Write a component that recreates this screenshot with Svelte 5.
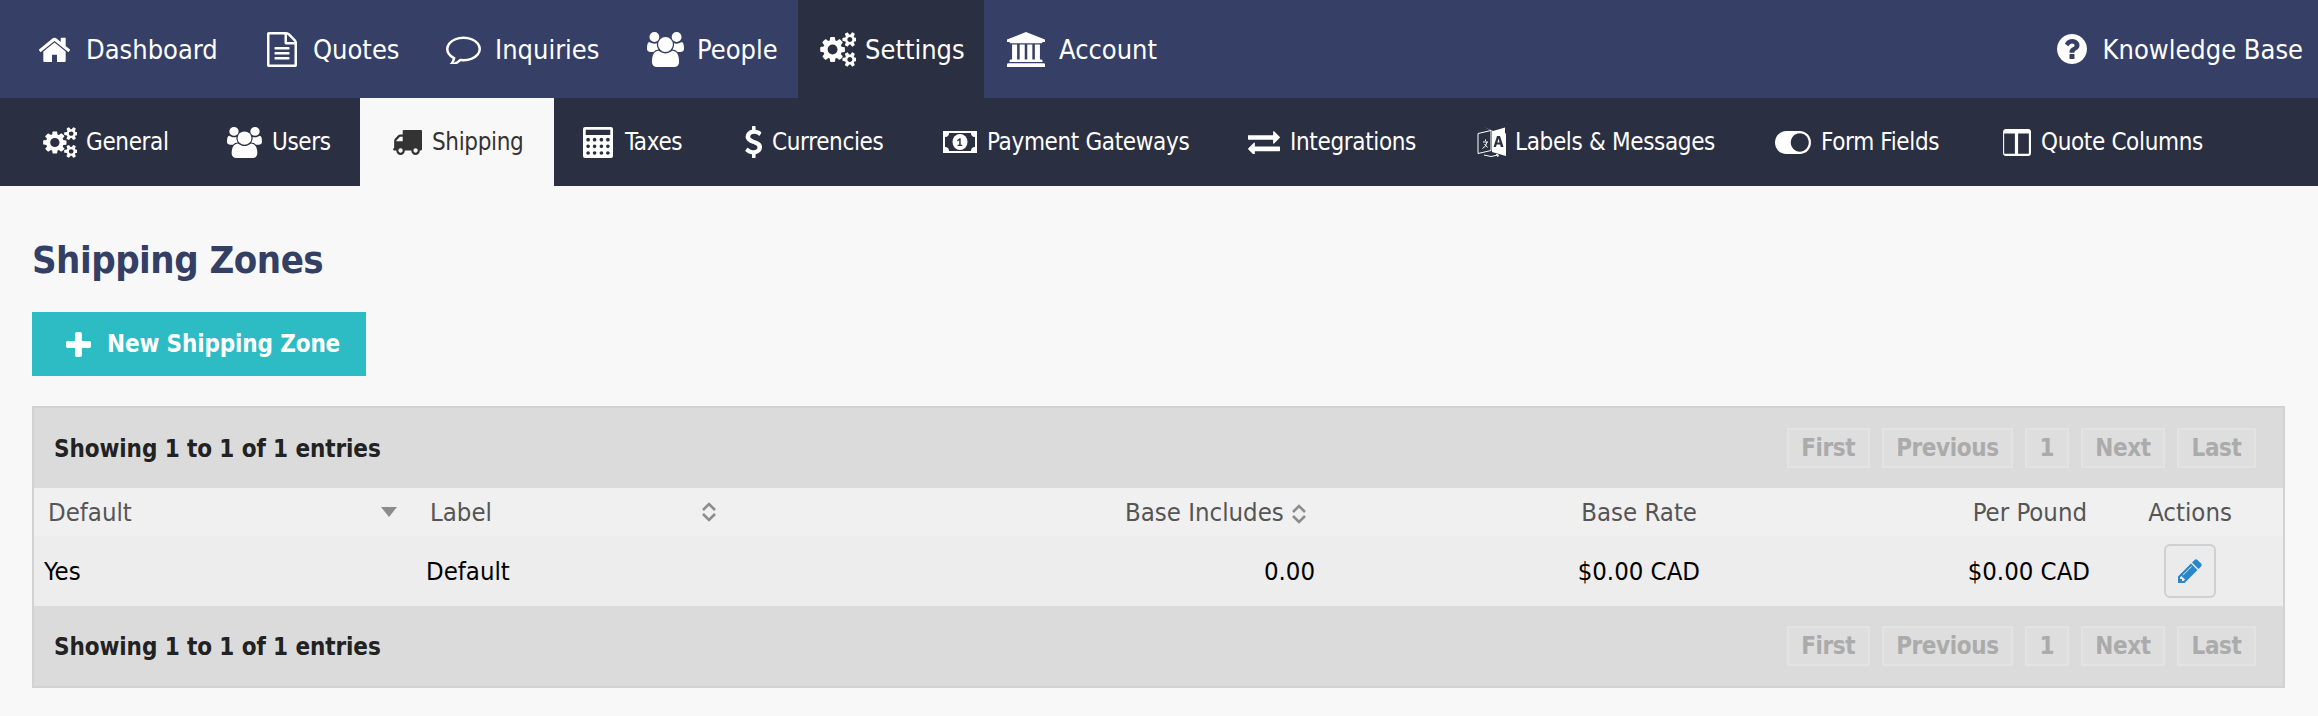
<script>
  // FontAwesome-style glyphs, viewBox cropped to the glyph
  const icons = {
    home: ['97 220 1598 1316', 'M1472 992v480q0 26-19 45t-45 19h-384v-384h-256v384h-384q-26 0-45-19t-19-45v-480q0-1 .5-3t.5-3l575-474 575 474q1 2 1 6zm223-69l-62 74q-8 9-21 11h-3q-13 0-21-7l-692-577-692 577q-12 8-24 7-13-2-21-11l-62-74q-8-10-7-23.5t11-21.5l719-599q32-26 76-26t76 26l244 204v-195q0-14 9-23t23-9h192q14 0 23 9t9 23v408l219 182q10 8 11 21.5t-7 23.5z'],
    file: ['128 0 1536 1792', 'M1596 380q28 28 48 76t20 88v1152q0 40-28 68t-68 28h-1344q-40 0-68-28t-28-68v-1600q0-40 28-68t68-28h896q40 0 88 20t76 48zm-444-244v376h376q-10-29-22-41l-313-313q-12-12-41-22zm384 1528v-1024h-416q-40 0-68-28t-28-68v-416h-768v1536h1280zm-1024-864q0-14 9-23t23-9h704q14 0 23 9t9 23v64q0 14-9 23t-23 9h-704q-14 0-23-9t-9-23v-64zm736 224q14 0 23 9t9 23v64q0 14-9 23t-23 9h-704q-14 0-23-9t-9-23v-64q0-14 9-23t23-9h704zm0 256q14 0 23 9t9 23v64q0 14-9 23t-23 9h-704q-14 0-23-9t-9-23v-64q0-14 9-23t23-9h704z'],
    comment: ['0 128 1792 1536', 'M896 384q-204 0-381.5 69.5t-282 187.5-104.5 255q0 112 71.5 213.5t201.5 175.5l87 50-27 96q-24 91-70 172 152-63 275-171l43-38 57 6q69 8 130 8 204 0 381.5-69.5t282-187.5 104.5-255-104.5-255-282-187.5-381.5-69.5zm896 512q0 174-120 321.5t-326 233-450 85.5q-70 0-145-8-198 175-460 242-49 14-114 22h-5q-15 0-27-10.5t-16-27.5v-1q-3-4-.5-12t2-10 4.5-9.5l6-9 7-8.5 8-9q7-8 31-34.5t34.5-38 31-39.5 32.5-51 27-59 26-76q-157-89-247.5-220t-90.5-281q0-174 120-321.5t326-233 450-85.5 450 85.5 326 233 120 321.5z'],
    users: ['0 0 1920 1792', 'M593 896q-162 5-265 128h-134q-82 0-138-40.5t-56-118.5q0-353 124-353 6 0 43.5 21t97.5 42.5 119 21.5q67 0 133-23-5 37-5 66 0 139 81 256zm1071 637q0 120-73 189.5t-194 69.5h-874q-121 0-194-69.5t-73-189.5q0-53 3.5-103.5t14-109 26.5-108.5 43-97.5 62-81 85.5-53.5 111.5-20q10 0 43 21.5t73 48 107 48 135 21.5 135-21.5 107-48 73-48 43-21.5q61 0 111.5 20t85.5 53.5 62 81 43 97.5 26.5 108.5 14 109 3.5 103.5zm-1024-1277q0 106-75 181t-181 75-181-75-75-181 75-181 181-75 181 75 75 181zm704 384q0 159-112.5 271.5t-271.5 112.5-271.5-112.5-112.5-271.5 112.5-271.5 271.5-112.5 271.5 112.5 112.5 271.5zm576 225q0 78-56 118.5t-138 40.5h-134q-103-123-265-128 81-117 81-256 0-29-5-66 66 23 133 23 59 0 119-21.5t97.5-42.5 43.5-21q124 0 124 353zm-128-609q0 106-75 181t-181 75-181-75-75-181 75-181 181-75 181 75 75 181z'],
    cogs: ['0 0 1920 1792', 'M960 896q0-106-75-181t-181-75-181 75-75 181 75 181 181 75 181-75 75-181zm768 512q0-52-38-90t-90-38-90 38-38 90q0 53 37.5 90.5t90.5 37.5 90.5-37.5 37.5-90.5zm0-1024q0-52-38-90t-90-38-90 38-38 90q0 53 37.5 90.5t90.5 37.5 90.5-37.5 37.5-90.5zm-384 421v185q0 10-7 19.5t-16 10.5l-155 24q-11 35-32 76 34 48 90 115 7 11 7 20 0 12-7 19-23 30-82.5 89.5t-78.5 59.5q-11 0-21-7l-115-90q-37 19-77 31-11 108-23 155-7 24-30 24h-186q-11 0-20-7.5t-10-17.5l-23-153q-34-10-75-31l-118 89q-7 7-20 7-11 0-21-8-144-133-144-160 0-9 7-19 10-14 41-53t47-61q-23-44-35-82l-152-24q-10-1-17-9.5t-7-19.5v-185q0-10 7-19.5t16-10.5l155-24q11-35 32-76-34-48-90-115-7-11-7-20 0-12 7-20 22-30 82-89t79-59q11 0 21 7l115 90q34-18 77-32 11-108 23-154 7-24 30-24h186q11 0 20 7.5t10 17.5l23 153q34 10 75 31l118-89q8-7 20-7 11 0 21 8 144 133 144 160 0 8-7 19-12 16-42 54t-45 60q23 48 34 82l152 23q10 2 17 10.5t7 19.5zm640 533v140q0 16-149 31-12 27-30 52 51 113 51 138 0 4-4 7-122 71-124 71-8 0-46-47t-52-68q-20 2-30 2t-30-2q-14 21-52 68t-46 47q-2 0-124-71-4-3-4-7 0-25 51-138-18-25-30-52-149-15-149-31v-140q0-16 149-31 13-29 30-52-51-113-51-138 0-4 4-7 4-2 35-20t59-34 30-16q8 0 46 46.5t52 67.5q20-2 30-2t30 2q51-71 92-112l6-2q4 0 124 70 4 3 4 7 0 25-51 138 17 23 30 52 149 15 149 31zm0-1024v140q0 16-149 31-12 27-30 52 51 113 51 138 0 4-4 7-122 71-124 71-8 0-46-47t-52-68q-20 2-30 2t-30-2q-14 21-52 68t-46 47q-2 0-124-71-4-3-4-7 0-25 51-138-18-25-30-52-149-15-149-31v-140q0-16 149-31 13-29 30-52-51-113-51-138 0-4 4-7 4-2 35-20t59-34 30-16q8 0 46 46.5t52 67.5q20-2 30-2t30 2q51-71 92-112l6-2q4 0 124 70 4 3 4 7 0 25-51 138 17 23 30 52 149 15 149 31z'],
    bank: ['0 0 1920 1792', 'M960 0l960 384v128h-128q0 26-20.5 45t-48.5 19h-1526q-28 0-48.5-19t-20.5-45h-128v-128zm-704 640h256v768h128v-768h256v768h128v-768h256v768h128v-768h256v768h59q28 0 48.5 19t20.5 45v64h-1664v-64q0-26 20.5-45t48.5-19h59v-768zm1595 960q28 0 48.5 19t20.5 45v128h-1920v-128q0-26 20.5-45t48.5-19h1782z'],
    truck: ['0 256 1792 1408', 'M640 1408q0-52-38-90t-90-38-90 38-38 90 38 90 90 38 90-38 38-90zm-384-512h384v-256h-158q-13 0-22 9l-195 195q-9 9-9 22v30zm1280 512q0-52-38-90t-90-38-90 38-38 90 38 90 90 38 90-38 38-90zm256-1088v1024q0 15-4 26.5t-13.5 18.5-16.5 11.5-23.5 6-22.5 2-25.5 0-22.5-.5q0 106-75 181t-181 75-181-75-75-181h-384q0 106-75 181t-181 75-181-75-75-181h-64q-3 0-22.5.5t-25.5 0-22.5-2-23.5-6-16.5-11.5-13.5-18.5-4-26.5q0-26 19-45t45-19v-320q0-8-.5-35t0-38 2.5-34.5 6.5-37 14-30.5 22.5-30l198-198q19-19 50.5-32t58.5-13h160v-192q0-26 19-45t45-19h1024q26 0 45 19t19 45z'],
    dollar: ['416 0 946 1792', 'M1362 1185q0 153-99.5 263.5t-258.5 136.5v175q0 14-9 23t-23 9h-135q-13 0-22.5-9.5t-9.5-22.5v-175q-66-9-127.5-31t-101.5-44.5-74-48-46.5-37.5-17.5-18q-17-21-2-41l103-135q7-10 23-12 15-2 24 9l2 2q113 99 243 125 37 8 74 8 81 0 142.5-43t61.5-122q0-28-15-53t-33.5-42-58.5-37.5-66-32-80-32.5q-39-16-61.5-25t-61.5-26.5-62.5-31-56.5-35.5-53.5-42.5-43.5-49-35.5-58-21-66.5-8.5-78q0-138 98-242t255-134v-180q0-13 9.5-22.5t22.5-9.5h135q14 0 23 9t9 23v176q57 6 110.5 23t87 33.5 63.5 37.5 39 29 15 14q17 18 5 38l-81 146q-8 15-23 16-14 3-27-7-3-3-14.5-12t-39-26.5-58.5-32-74.5-26-85.5-11.5q-95 0-155 43t-60 111q0 26 8.5 48t29.5 41.5 39.5 33 56 31 60.5 27 70 27.5q53 20 81 31.5t76 35 75.5 42.5 62 50 53 63.5 31.5 76.5 13 94z'],
    exchange: ['0 224 1792 1344', 'M1792 1184v192q0 13-9.5 22.5t-22.5 9.5h-1376v192q0 13-9.5 22.5t-22.5 9.5q-12 0-24-10l-319-320q-9-9-9-22 0-14 9-23l320-320q9-9 23-9 13 0 22.5 9.5t9.5 22.5v192h1376q13 0 22.5 9.5t9.5 22.5zm0-544q0 14-9 23l-320 320q-9 9-23 9-13 0-22.5-9.5t-9.5-22.5v-192h-1376q-13 0-22.5-9.5t-9.5-22.5v-192q0-13 9.5-22.5t22.5-9.5h1376v-192q0-14 9-23t23-9q12 0 24 10l319 319q9 9 9 23z'],
    toggle: ['0 256 2048 1280', 'M0 896q0-130 51-248.5t136.5-204 204-136.5 248.5-51h768q130 0 248.5 51t204 136.5 136.5 204 51 248.5-51 248.5-136.5 204-204 136.5-248.5 51h-768q-130 0-248.5-51t-204-136.5-136.5-204-51-248.5zm1408 512q104 0 198.5-40.5t163.5-109.5 109.5-163.5 40.5-198.5-40.5-198.5-109.5-163.5-163.5-109.5-198.5-40.5-198.5 40.5-163.5 109.5-109.5 163.5-40.5 198.5 40.5 198.5 109.5 163.5 163.5 109.5 198.5 40.5z'],
    columns: ['0 0 1728 1536', 'M160 1408h608v-1152h-640v1120q0 13 9.5 22.5t22.5 9.5zm1440-32v-1120h-640v1152h608q13 0 22.5-9.5t9.5-22.5zm128-1216v1216q0 66-47 113t-113 47h-1344q-66 0-113-47t-47-113v-1216q0-66 47-113t113-47h1344q66 0 113 47t47 113z'],
    question: ['128 128 1536 1536', 'M1024 1376v-192q0-14-9-23t-23-9h-192q-14 0-23 9t-9 23v192q0 14 9 23t23 9h192q14 0 23-9t9-23zm256-672q0-88-55.5-163t-138.5-116-170-41q-243 0-371 213-15 24 8 42l132 100q7 6 19 6 16 0 25-12 53-68 86-92 34-24 86-24 48 0 85.5 26t37.5 59q0 38-20 61t-68 45q-63 28-115.5 86.5t-52.5 125.5v36q0 14 9 23t23 9h192q14 0 23-9t9-23q0-19 21.5-49.5t54.5-49.5q32-18 49-28.5t46-35 44.5-48 28-60.5 12.5-81zm384 192q0 209-103 385.5t-279.5 279.5-385.5 103-385.5-103-279.5-279.5-103-385.5 103-385.5 279.5-279.5 385.5-103 385.5 103 279.5 279.5 103 385.5z'],
    plus: ['192 128 1408 1408', 'M1600 736v192q0 40-28 68t-68 28h-416v416q0 40-28 68t-68 28h-192q-40 0-68-28t-28-68v-416h-416q-40 0-68-28t-28-68v-192q0-40 28-68t68-28h416v-416q0-40 28-68t68-28h192q40 0 68 28t28 68v416h416q40 0 68 28t28 68z'],
    pencil: ['128 128 1536 1536', 'M491 1536l91-91-235-235-91 91v107h128v128h107zm523-928q0-22-22-22-10 0-17 7l-542 542q-7 7-7 17 0 22 22 22 10 0 17-7l542-542q7-7 7-17zm-54-192l416 416-832 832h-416v-416zm683 96q0 53-37 90l-166 166-416-416 166-165q36-38 90-38 53 0 91 38l235 234q37 39 37 91z']
  };

  // calculator: body with screen and 4x3 button holes, cut with evenodd
  let calc = 'M6 0h76q6 0 6 6v81q0 6-6 6h-76q-6 0-6-6v-81q0-6 6-6zM8 8v16h72v-16z';
  for (const y of [38, 58, 78]) for (const x of [15, 34, 54, 73]) {
    calc += `M${x - 5.5} ${y}a5.500 5.500 0 1 0 11 0a5.500 5.500 0 1 0 -11 0z`;
  }
  icons.calc = ['0 0 88 93', calc];

  const topNav = [
    { label: 'Dashboard', icon: 'home', width: 238, pad: 39, w: 31, h: 25, gap: 16 },
    { label: 'Quotes', icon: 'file', width: 187, pad: 29, w: 30, h: 35, gap: 16 },
    { label: 'Inquiries', icon: 'comment', width: 198, pad: 21, w: 35, h: 30, gap: 14 },
    { label: 'People', icon: 'users', width: 175, pad: 24, w: 37, h: 35, gap: 13 },
    { label: 'Settings', icon: 'cogs', width: 186, pad: 21, w: 37, h: 35, gap: 9, active: true },
    { label: 'Account', icon: 'bank', width: 196, pad: 23, w: 38, h: 35, gap: 14 }
  ];

  const subNav = [
    { label: 'General', icon: 'cogs', width: 200, pad: 42, w: 35, h: 31, gap: 9 },
    { label: 'Users', icon: 'users', width: 160, pad: 27, w: 35, h: 31, gap: 10 },
    { label: 'Shipping', icon: 'truck', width: 194, pad: 32, w: 30, h: 25, gap: 10, active: true },
    { label: 'Taxes', icon: 'calc', width: 161, pad: 29, w: 30, h: 31, gap: 12 },
    { label: 'Currencies', icon: 'dollar', width: 200, pad: 30, w: 17, h: 32, gap: 10 },
    { label: 'Payment Gateways', icon: 'money', width: 303, pad: 28, w: 34, h: 22, gap: 10 },
    { label: 'Integrations', icon: 'exchange', width: 230, pad: 30, w: 32, h: 24, gap: 10 },
    { label: 'Labels & Messages', icon: 'language', width: 297, pad: 29, w: 29, h: 31, gap: 9 },
    { label: 'Form Fields', icon: 'toggle', width: 228, pad: 30, w: 36, h: 23, gap: 10 },
    { label: 'Quote Columns', icon: 'columns', width: 260, pad: 29, w: 29, h: 27, gap: 10 }
  ];

  const pages = ['First', 'Previous', '1', 'Next', 'Last'];
</script>

{#snippet glyph(name, w, h)}
  {#if name === 'money'}
    <svg width={w} height={h} viewBox="0 0 34 22" class="ico" aria-hidden="true">
      <path fill="currentColor" fill-rule="evenodd" d="M0 0h34v22h-34zM6 2q0 4-4 4v10q4 0 4 4h22q0-4 4-4v-10q-4 0-4-4z" />
      <ellipse cx="17" cy="11" rx="7.5" ry="8" fill="currentColor" />
      <path d="M14.6 15v-1.2h1.6v-4.6l-1.5 1-.7-1 2.6-1.9h1.1v6.5h1.5v1.2z" fill="#2b2f42" />
    </svg>
  {:else if name === 'language'}
    <svg width={w} height={h} viewBox="0 0 29 31" class="ico" aria-hidden="true">
      <path fill="none" stroke="currentColor" stroke-width="1" d="M1 6.500l13-3v20l-13 3z" />
      <path fill="none" stroke="currentColor" stroke-width="1" d="M6 15h5M8.500 12.500v1.500M10 15q-1 5-4.500 6.500M7.500 17l3 3.500" />
      <path fill="currentColor" d="M7 0l9 4 12-3.500v5.500l1 1v22l-14-4V4z" />
      <path fill="#2b2f42" fill-rule="evenodd" d="M20 9h3l3.500 11h-2.700l-.7-2.500h-3.400l-.7 2.500h-2.500zM21.500 11.500l-1.100 4h2.200z" />
      <path fill="none" stroke="currentColor" stroke-width="1" d="M7 28q7 3 14 0M19 27.500l2.500.5-1 2" />
    </svg>
  {:else}
    <svg width={w} height={h} viewBox={icons[name][0]} preserveAspectRatio="none" class="ico" aria-hidden="true">
      <path fill="currentColor" fill-rule="evenodd" d={icons[name][1]} />
    </svg>
  {/if}
{/snippet}

{#snippet sortBoth()}
  <svg class="sort" width="16" height="20" viewBox="0 0 16 20" aria-hidden="true">
    <path d="M2 8l6-6 6 6M2 12l6 6 6-6" fill="none" stroke="#8c8c8c" stroke-width="2.600" />
  </svg>
{/snippet}

{#snippet pager()}
  <div class="bar">
    <span class="info">Showing 1 to 1 of 1 entries</span>
    <div class="pager">
      {#each pages as p}<span class="page">{p}</span>{/each}
    </div>
  </div>
{/snippet}

<nav class="top">
  {#each topNav as n}
    <a class="item" class:on={n.active} href="#top" style={`width:${n.width}px;padding-left:${n.pad}px`}>
      {@render glyph(n.icon, n.w, n.h)}
      <span style={`margin-left:${n.gap}px`}>{n.label}</span>
    </a>
  {/each}
  <a class="item kb" href="#top">
    {@render glyph('question', 30, 30)}
    <span>Knowledge Base</span>
  </a>
</nav>

<nav class="sub">
  {#each subNav as n}
    <a class="item" class:on={n.active} href="#top" style={`width:${n.width}px;padding-left:${n.pad}px`}>
      {@render glyph(n.icon, n.w, n.h)}
      <span style={`margin-left:${n.gap}px`}>{n.label}</span>
    </a>
  {/each}
</nav>

<main>
  <h1>Shipping Zones</h1>
  <button class="add">
    {@render glyph('plus', 25, 25)}
    <span>New Shipping Zone</span>
  </button>

  <div class="box">
    {@render pager()}
    <table>
      <colgroup>
        <col class="c1" /><col class="c2" /><col class="c3" /><col class="c4" /><col class="c5" /><col />
      </colgroup>
      <thead>
        <tr>
          <th class="sp"><span class="thi">Default <svg class="sort" width="16" height="10" viewBox="0 0 16 10" aria-hidden="true"><path d="M0 0h16l-8 10z" fill="#8c8c8c" /></svg></span></th>
          <th class="sp"><span class="thi">Label {@render sortBoth()}</span></th>
          <th class="r inc">Base Includes {@render sortBoth()}</th>
          <th class="r">Base Rate</th>
          <th class="r">Per Pound</th>
          <th class="act">Actions</th>
        </tr>
      </thead>
      <tbody>
        <tr>
          <td>Yes</td>
          <td>Default</td>
          <td class="r">0.00</td>
          <td class="r">$0.00 CAD</td>
          <td class="r">$0.00 CAD</td>
          <td class="act"><button class="edit" aria-label="Edit">{@render glyph('pencil', 24, 24)}</button></td>
        </tr>
      </tbody>
    </table>
    {@render pager()}
  </div>
</main>

<style>
  :global(body) { background: #f8f8f8; font-family: "DejaVu Sans", Verdana, sans-serif; font-stretch: condensed; }
  a { text-decoration: none; color: inherit; }
  .ico { display: block; flex: none; }

  .top, .sub { display: flex; color: #fff; }
  .top { height: 98px; background: #364066; font-size: 27px; }
  .sub { height: 88px; background: #2b2f42; font-size: 24px; letter-spacing: -0.35px; }
  .item { display: flex; align-items: center; box-sizing: border-box; flex: none; }
  .top .item.on { background: #2b2f42; }
  .sub .item.on { background: #f8f8f8; color: #333; }
  .kb { margin-left: auto; padding-right: 15px; gap: 16px; }

  main { padding: 0 33px 28px 32px; }
  h1 { margin: 0; padding-top: 52px; height: 74px; font-size: 38px; line-height: 44px; color: #343f66; font-weight: 700; letter-spacing: -0.5px; }
  .add { display: flex; align-items: center; gap: 16px; width: 334px; height: 64px; padding: 0 0 0 34px; border: 0; background: #2dbcc4; color: #fff; font: inherit; font-weight: 700; font-size: 24px; letter-spacing: -0.15px; }

  .box { margin-top: 30px; border: 2px solid #d2d2d2; background: #ededed; color: #000; font-size: 25.5px; }
  .bar { display: flex; justify-content: space-between; align-items: center; height: 80px; padding: 0 27px 0 20px; background: #dbdbdb; font-size: 24px; }
  .info { padding-top: 2px; font-weight: 700; color: #222; letter-spacing: -0.1px; }
  .pager { display: flex; gap: 12px; }
  .page { display: flex; align-items: center; padding: 0 12.5px; height: 40px; box-sizing: border-box; border: 2px solid #e3e3e3; background: #dedede; color: #ababab; font-weight: 700; letter-spacing: -0.4px; }

  table { width: 100%; table-layout: fixed; border-collapse: collapse; }
  .c1 { width: 382px; }
  .c2 { width: 320px; }
  .c3 { width: 589px; }
  .c4 { width: 385px; }
  .c5 { width: 390px; }
  th { height: 48px; padding: 0 13px 0 14px; background: #f0f0f0; color: #555; font-weight: 400; text-align: left; }
  td { height: 70px; padding: 0 10px; }
  .r { text-align: right; }
  .thi { display: flex; align-items: center; justify-content: space-between; padding-right: 6px; }
  th.inc { padding-right: 18px; }
  .sort { display: inline-block; vertical-align: middle; }
  .act { text-align: center; padding: 0 3px 0 0; }
  .edit { display: inline-flex; align-items: center; justify-content: center; width: 52px; height: 54px; padding: 0; border: 2px solid #d0d0d0; border-radius: 6px; background: #ebebeb; color: #2a85c9; vertical-align: middle; }
</style>
